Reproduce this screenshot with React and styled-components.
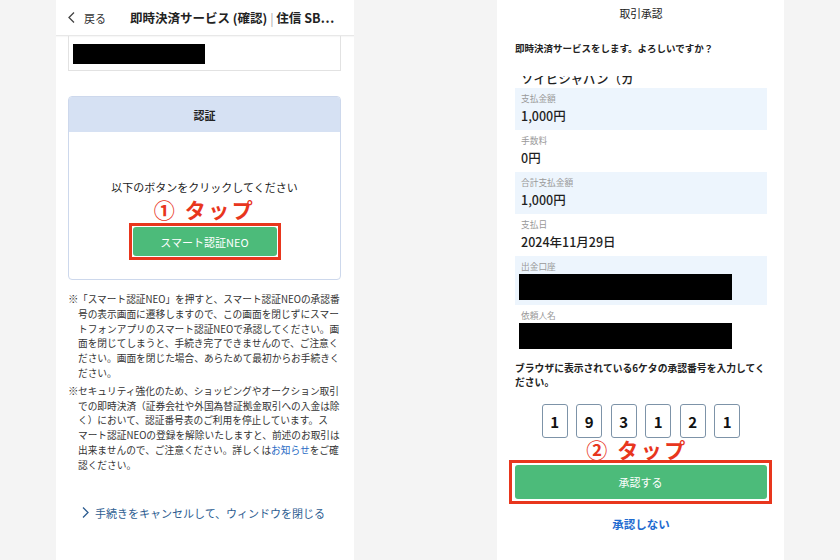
import React from 'react';
import styled, { createGlobalStyle } from 'styled-components';

const GlobalStyle = createGlobalStyle`
  body {
    margin: 0;
    background: #f4f4f4;
    font-family: "Noto Sans CJK JP", "Noto Sans", sans-serif;
    color: #222;
  }
`;

const Stage = styled.div`
  width: 840px;
  height: 560px;
  display: flex;
  justify-content: center;
  gap: 143px;
  overflow: hidden;
  background: #f4f4f4;
`;

/* ---------- left screen ---------- */

const LeftPhone = styled.div`
  width: 298px;
  height: 560px;
  background: #fff;
  display: flex;
  flex-direction: column;
  overflow: hidden;
`;

const Header = styled.div`
  height: 36px;
  box-sizing: border-box;
  display: flex;
  align-items: center;
  padding: 0 12px;
  border-bottom: 1px solid #e8e8e8;
  box-shadow: 0 1px 1px rgba(0, 0, 0, 0.03);
`;

const Back = styled.div`
  display: flex;
  align-items: center;
  gap: 9px;
  font-size: 11px;
  color: #333;
`;

const Title = styled.div`
  margin-left: 24px;
  font-size: 12.5px;
  font-weight: 700;
  white-space: nowrap;
  color: #222;

  span {
    color: #aaa;
    font-weight: 400;
  }
`;

const LeftBody = styled.div`
  padding: 0 13px 0 12px;
`;

const MaskedBox = styled.div`
  height: 35px;
  box-sizing: border-box;
  border: 1px solid #e2e2e2;
  border-top: none;
  padding: 8px 4px 0;
`;

const Redact = styled.div`
  background: #000;
  width: ${(p) => p.$w}px;
  height: ${(p) => p.$h}px;
`;

const Card = styled.div`
  margin-top: 25px;
  border: 1px solid #cdd8ec;
  border-radius: 4px;
  overflow: hidden;
`;

const CardHead = styled.div`
  height: 35px;
  display: flex;
  align-items: center;
  justify-content: center;
  background: #d6e1f3;
  font-size: 11px;
  font-weight: 700;
`;

const CardBody = styled.div`
  display: flex;
  flex-direction: column;
  align-items: center;
  padding: 48px 0 19px;
`;

const Prompt = styled.div`
  font-size: 11px;
  line-height: 14px;
  color: #222;
`;

const TapLabel = styled.div`
  margin-top: ${(p) => p.$top || 0}px;
  padding-right: ${(p) => p.$shift || 0}px;
  font-size: 21px;
  line-height: 22px;
  font-weight: 700;
  letter-spacing: 2.5px;
  color: #e8361d;
  text-align: center;
`;

const Highlight = styled.div`
  margin-top: 3px;
  border: 3px solid #e8361d;
  padding: 1px;
`;

const GreenButton = styled.button`
  display: flex;
  align-items: center;
  justify-content: center;
  width: ${(p) => (p.$wide ? '100%' : '144px')};
  height: ${(p) => (p.$wide ? 34 : 29)}px;
  border: none;
  border-radius: 3px;
  background: #4cbb7a;
  color: #fff;
  font-family: inherit;
  font-size: 11px;
  padding: 0;
`;

const Notes = styled.div`
  margin-top: 12px;
  font-size: 9.7px;
  line-height: 14.8px;
  color: #333;
  white-space: nowrap;
`;

const Note = styled.div`
  display: flex;
  margin-bottom: 3px;
`;

const Mark = styled.span`
  width: 10px;
  flex: none;
  font-size: 10.5px;
`;

const InlineLink = styled.span`
  color: #2a6cc4;
`;

const CancelLink = styled.div`
  margin: 32px 0 0 14px;
  display: flex;
  align-items: center;
  gap: 6px;
  font-size: 11px;
  line-height: 16px;
  color: #2d5d91;
`;

/* ---------- right screen ---------- */

const RightPhone = styled.div`
  width: 287px;
  height: 560px;
  box-sizing: border-box;
  background: #fff;
  padding: 0 17px 0 18px;
  display: flex;
  flex-direction: column;
  overflow: hidden;
`;

const TitleBar = styled.div`
  height: 26px;
  display: flex;
  align-items: center;
  justify-content: center;
  font-size: 10.8px;
  color: #222;
`;

const Question = styled.div`
  margin-top: 15px;
  font-size: 9.5px;
  line-height: 14px;
  font-weight: 700;
`;

const Viewport = styled.div`
  margin-top: 21px;
  overflow: hidden;
`;

const Row = styled.div`
  background: ${(p) => (p.$shade ? '#edf5fd' : '#fff')};
  padding: 5px 4px;
`;

const RowTail = styled(Row)`
  margin-top: -6px;
  padding-top: 0;
  padding-bottom: 0;
`;

const Label = styled.div`
  padding-left: 2px;
  font-size: 8.7px;
  line-height: 12px;
  color: #999;
`;

const Value = styled.div`
  margin-top: ${(p) => (p.$flush ? 0 : 2)}px;
  padding-left: 2px;
  font-size: 12.5px;
  line-height: 18px;
  font-weight: 500;
  color: #1f1f1f;
`;

const RedactSlot = styled.div`
  margin-top: 1px;
`;

const Instruction = styled.div`
  margin-top: 8px;
  font-size: 9.8px;
  line-height: 13.5px;
  font-weight: 700;
  white-space: nowrap;
`;

const DigitRow = styled.div`
  margin-top: 15px;
  display: flex;
  justify-content: center;
  gap: 8.5px;
`;

const Digit = styled.div`
  width: 26px;
  height: 34px;
  box-sizing: border-box;
  display: flex;
  align-items: center;
  justify-content: center;
  border: 1px solid #7d93a8;
  border-bottom-width: 1.5px;
  border-radius: 3px;
  font-size: 15px;
  font-weight: 700;
  color: #111;
`;

const Frame = styled.div`
  margin: 0 -5px 0 -6px;
  border: 3px solid #e8361d;
  padding: 2px 2.5px;
`;

const Decline = styled.div`
  margin-top: 12px;
  text-align: center;
  font-size: 11.5px;
  line-height: 16px;
  font-weight: 700;
  color: #1e6bd0;
`;

const Chevron = ({ dir, color }) => (
  <svg width="7" height="11" viewBox="0 0 7 11">
    <polyline
      points={dir === 'left' ? '6,0.5 1,5.5 6,10.5' : '1,0.5 6,5.5 1,10.5'}
      fill="none"
      stroke={color}
      strokeWidth="1.3"
    />
  </svg>
);

const details = [
  { label: '支払金額', value: '1,000円' },
  { label: '手数料', value: '0円' },
  { label: '合計支払金額', value: '1,000円' },
  { label: '支払日', value: '2024年11月29日' },
  { label: '出金口座', hidden: true },
  { label: '依頼人名', hidden: true },
];

const code = ['1', '9', '3', '1', '2', '1'];

export default function App() {
  return (
    <>
      <GlobalStyle />
      <Stage>
        <LeftPhone>
          <Header>
            <Back>
              <Chevron dir="left" color="#444" />
              戻る
            </Back>
            <Title>
              即時決済サービス (確認) <span>|</span> 住信 SB…
            </Title>
          </Header>
          <LeftBody>
            <MaskedBox>
              <Redact $w={132} $h={20} />
            </MaskedBox>

            <Card>
              <CardHead>認証</CardHead>
              <CardBody>
                <Prompt>以下のボタンをクリックしてください</Prompt>
                <TapLabel $top={4}>① タップ</TapLabel>
                <Highlight>
                  <GreenButton>スマート認証NEO</GreenButton>
                </Highlight>
              </CardBody>
            </Card>

            <Notes>
              <Note>
                <Mark>※</Mark>
                <div>
                  「スマート認証NEO」を押すと、スマート認証NEOの承認番<br />
                  号の表示画面に遷移しますので、この画面を閉じずにスマー<br />
                  トフォンアプリのスマート認証NEOで承認してください。画<br />
                  面を閉じてしまうと、手続き完了できませんので、ご注意く<br />
                  ださい。画面を閉じた場合、あらためて最初からお手続きく<br />
                  ださい。
                </div>
              </Note>
              <Note>
                <Mark>※</Mark>
                <div>
                  セキュリティ強化のため、ショッピングやオークション取引<br />
                  での即時決済（証券会社や外国為替証拠金取引への入金は除<br />
                  く）において、認証番号表のご利用を停止しています。ス<br />
                  マート認証NEOの登録を解除いたしますと、前述のお取引は<br />
                  出来ませんので、ご注意ください。詳しくは
                  <InlineLink>お知らせ</InlineLink>をご確<br />
                  認ください。
                </div>
              </Note>
            </Notes>

            <CancelLink>
              <Chevron dir="right" color="#2d5d91" />
              手続きをキャンセルして、ウィンドウを閉じる
            </CancelLink>
          </LeftBody>
        </LeftPhone>

        <RightPhone>
          <TitleBar>取引承認</TitleBar>
          <Question>即時決済サービスをします。よろしいですか？</Question>

          <Viewport>
            <RowTail>
              <Value $flush>ソイビジャパン（カ</Value>
            </RowTail>
            {details.map((d, i) => (
              <Row key={d.label} $shade={i % 2 === 0}>
                <Label>{d.label}</Label>
                {d.hidden ? (
                  <RedactSlot>
                    <Redact $w={213} $h={26} />
                  </RedactSlot>
                ) : (
                  <Value>{d.value}</Value>
                )}
              </Row>
            ))}
          </Viewport>

          <Instruction>
            ブラウザに表示されている6ケタの承認番号を入力してく<br />
            ださい。
          </Instruction>

          <DigitRow>
            {code.map((n, i) => (
              <Digit key={i}>{n}</Digit>
            ))}
          </DigitRow>

          <TapLabel $shift={8}>② タップ</TapLabel>
          <Frame>
            <GreenButton $wide>承認する</GreenButton>
          </Frame>
          <Decline>承認しない</Decline>
        </RightPhone>
      </Stage>
    </>
  );
}
